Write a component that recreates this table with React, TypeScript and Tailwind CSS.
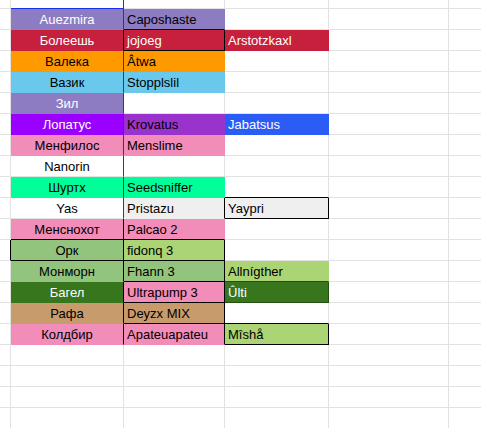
import React from "react";

type C = { t?: string; bg?: string; fg?: string; r?: string; b?: string; al?: "c" | "l" };

const BG: Record<string, string> = {
  purple: "bg-[#8e7cc3]",
  red: "bg-[#c7203d]",
  orange: "bg-[#ff9900]",
  sky: "bg-[#6ac8ec]",
  violet: "bg-[#9900ff]",
  krov: "bg-[#9a33cc]",
  blue: "bg-[#2b5cf6]",
  pink: "bg-[#f28cb9]",
  mint: "bg-[#00ff99]",
  lgray: "bg-[#efefef]",
  green: "bg-[#93c47d]",
  lime: "bg-[#abd574]",
  dgreen: "bg-[#38761d]",
  tan: "bg-[#c79b6c]",
  white: "bg-white",
};

const BR: Record<string, string> = {
  g: "border-r-[#e2e2e2]",
  k: "border-r-[#000000]",
  u: "border-r-[#1a2ef0]",
  dg2: "border-r-[#274e13]",
  purple: "border-r-[#8e7cc3]",
  red: "border-r-[#c7203d]",
  orange: "border-r-[#ff9900]",
  sky: "border-r-[#6ac8ec]",
  violet: "border-r-[#9900ff]",
  krov: "border-r-[#9a33cc]",
  blue: "border-r-[#2b5cf6]",
  pink: "border-r-[#f28cb9]",
  mint: "border-r-[#00ff99]",
  lgray: "border-r-[#efefef]",
  green: "border-r-[#93c47d]",
  lime: "border-r-[#abd574]",
  dgreen: "border-r-[#38761d]",
  tan: "border-r-[#c79b6c]",
};

const BB: Record<string, string> = {
  g: "border-b-[#e2e2e2]",
  k: "border-b-[#000000]",
  u: "border-b-[#1a2ef0]",
  dg2: "border-b-[#274e13]",
  purple: "border-b-[#8e7cc3]",
  red: "border-b-[#c7203d]",
  orange: "border-b-[#ff9900]",
  sky: "border-b-[#6ac8ec]",
  violet: "border-b-[#9900ff]",
  krov: "border-b-[#9a33cc]",
  blue: "border-b-[#2b5cf6]",
  pink: "border-b-[#f28cb9]",
  mint: "border-b-[#00ff99]",
  lgray: "border-b-[#efefef]",
  green: "border-b-[#93c47d]",
  lime: "border-b-[#abd574]",
  dgreen: "border-b-[#38761d]",
  tan: "border-b-[#c79b6c]",
};

type Row = { z?: string; a?: C; b?: C; c?: C };

const rows: Row[] = [
  { a: { t: "Auezmira", bg: "purple", fg: "w", r: "u", b: "purple" }, b: { t: "Caposhaste", bg: "purple", r: "purple", b: "k" } },
  { a: { t: "Болеешь", bg: "red", fg: "w", r: "k", b: "red" }, b: { t: "jojoeg", bg: "red", fg: "w", r: "k", b: "k" }, c: { t: "Arstotzkaxl", bg: "red", fg: "w", r: "red", b: "red" } },
  { a: { t: "Валека", bg: "orange", r: "u", b: "orange" }, b: { t: "Âtwa", bg: "orange", r: "orange", b: "orange" } },
  { a: { t: "Вазик", bg: "sky", r: "u", b: "sky" }, b: { t: "Stopplslil", bg: "sky", r: "sky", b: "sky" } },
  { a: { t: "Зил", bg: "purple", fg: "w", r: "u", b: "purple" } },
  { a: { t: "Лопатус", bg: "violet", fg: "w", r: "u", b: "violet" }, b: { t: "Krovatus", bg: "krov", r: "krov", b: "krov" }, c: { t: "Jabatsus", bg: "blue", fg: "w", r: "blue", b: "blue" } },
  { a: { t: "Менфилос", bg: "pink", r: "u", b: "pink" }, b: { t: "Menslime", bg: "pink", r: "pink", b: "pink" } },
  { a: { t: "Nanorin", r: "u" } },
  { a: { t: "Шуртх", bg: "mint", r: "u", b: "mint" }, b: { t: "Seedsniffer", bg: "mint", r: "mint", b: "mint" }, c: { b: "k" } },
  { a: { t: "Yas", r: "u" }, b: { t: "Pristazu", bg: "lgray", r: "k", b: "lgray" }, c: { t: "Yaypri", bg: "lgray", r: "k", b: "k" } },
  { a: { t: "Менснохот", bg: "pink", r: "k", b: "k" }, b: { t: "Palcao 2", bg: "pink", r: "pink", b: "k" } },
  { z: "k", a: { t: "Орк", bg: "green", r: "k", b: "k" }, b: { t: "fidonq 3", bg: "lime", r: "k", b: "k" } },
  { a: { t: "Монморн", bg: "green", r: "k", b: "green" }, b: { t: "Fhann 3", bg: "green", r: "k", b: "k" }, c: { t: "Allnígther", bg: "lime", r: "lime", b: "dg2" } },
  { a: { t: "Багел", bg: "dgreen", fg: "w", r: "k", b: "dgreen" }, b: { t: "Ultrapump 3", bg: "pink", r: "k", b: "k" }, c: { t: "Ûlti", bg: "dgreen", fg: "w", r: "dg2", b: "dg2" } },
  { a: { t: "Рафа", bg: "tan", r: "k", b: "tan" }, b: { t: "Deyzx MIX", bg: "tan", r: "k", b: "k" }, c: { b: "k" } },
  { a: { t: "Колдбир", bg: "pink", r: "k", b: "pink" }, b: { t: "Apateuapateu", bg: "pink", r: "k", b: "pink" }, c: { t: "Mîshå", bg: "lime", r: "k", b: "k" } },
  {},
  {},
  {},
  {},
];

function Cell({ c, w, al }: { c?: C; w: string; al: "c" | "l" }) {
  const cc = c || {};
  const bg = BG[cc.bg || "white"];
  const r = BR[cc.r || "g"];
  const b = BB[cc.b || "g"];
  const fg = cc.fg === "w" ? "text-white" : "text-black";
  return (
    <div
      className={`${w} h-full shrink-0 border-r border-b ${bg} ${r} ${b} ${fg} flex items-end pb-[2px] overflow-hidden whitespace-nowrap ${
        al === "c" ? "justify-center" : "justify-start pl-[3px]"
      }`}
    >
      {cc.t ? <span className="leading-[15px]">{cc.t}</span> : null}
    </div>
  );
}

export default function App() {
  return (
    <div
      className="w-[481px] h-[428px] overflow-hidden bg-white text-[13px]"
      style={{ fontFamily: '"Liberation Sans", Arial, sans-serif' }}
    >
      {/* partial top row */}
      <div className="flex h-[9px]">
        <div className="w-[11px] h-full shrink-0 border-r border-b border-r-[#e2e2e2] border-b-[#e2e2e2]" />
        <div className="w-[113px] h-full shrink-0 border-r border-b border-r-[#1a2ef0] border-b-[#1a2ef0]" />
        <div className="w-[101px] h-full shrink-0 border-r border-b border-r-[#e2e2e2] border-b-[#e2e2e2]" />
        <div className="w-[104px] h-full shrink-0 border-r border-b border-r-[#e2e2e2] border-b-[#e2e2e2]" />
        <div className="w-[120px] h-full shrink-0 border-r border-b border-r-[#e2e2e2] border-b-[#e2e2e2]" />
        <div className="w-[60px] h-full shrink-0 border-r border-b border-r-[#e2e2e2] border-b-[#e2e2e2]" />
      </div>
      {rows.map((row, i) => (
        <div key={i} className="flex h-[21px]">
          <Cell c={{ r: row.z }} w="w-[11px]" al="c" />
          <Cell c={row.a} w="w-[113px]" al="c" />
          <Cell c={row.b} w="w-[101px]" al="l" />
          <Cell c={row.c} w="w-[104px]" al="l" />
          <Cell w="w-[120px]" al="l" />
          <Cell w="w-[60px]" al="l" />
        </div>
      ))}
    </div>
  );
}
